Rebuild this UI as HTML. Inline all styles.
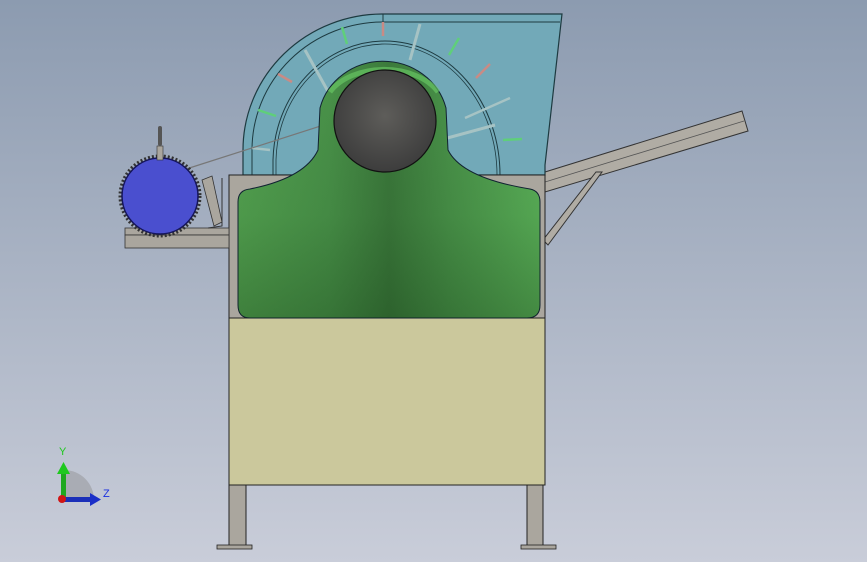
<!DOCTYPE html>
<html><head><style>
html,body{margin:0;padding:0;width:867px;height:562px;overflow:hidden}
</style></head><body>
<svg width="867" height="562" viewBox="0 0 867 562" xmlns="http://www.w3.org/2000/svg">
<defs>
<linearGradient id="bg" x1="0" y1="0" x2="0" y2="1">
<stop offset="0" stop-color="#8c9bb0"/><stop offset="1" stop-color="#c9cdd9"/></linearGradient>
<radialGradient id="ball" cx="0.5" cy="0.45" r="0.6">
<stop offset="0" stop-color="#5e5d5a"/><stop offset="1" stop-color="#3a3a3a"/></radialGradient>
<linearGradient id="gb" x1="0" y1="0" x2="1" y2="0">
<stop offset="0" stop-color="#55a552"/><stop offset="0.3" stop-color="#4a944a"/><stop offset="0.5" stop-color="#3c7a3c"/><stop offset="0.7" stop-color="#4a944a"/><stop offset="1" stop-color="#5cb35a"/></linearGradient>
<linearGradient id="gv" x1="0" y1="0" x2="0" y2="1">
<stop offset="0" stop-color="#000" stop-opacity="0"/><stop offset="0.6" stop-color="#0a2a0a" stop-opacity="0.1"/><stop offset="1" stop-color="#0a2a0a" stop-opacity="0.3"/></linearGradient>
</defs>
<rect width="867" height="562" fill="url(#bg)"/>
<polygon points="545,172 742,111 748,131 545,192" fill="#b0aca4" stroke="#333" stroke-width="1"/>
<line x1="545" y1="182" x2="744" y2="121" stroke="#555" stroke-width="0.8"/>
<polygon points="596,172 602,172 548,245 543,240" fill="#b0aca4" stroke="#333" stroke-width="1"/>
<path d="M243,175 L243,150 A140,136 0 0 1 383,14 L562,14 L545,165 L545,175 Z" fill="#72a9b8" stroke="#1d3a40" stroke-width="1.2"/>
<line x1="383" y1="14" x2="383" y2="22" stroke="#1d3a40"/>
<path d="M252,175 L252,150 A131,128 0 0 1 383,22 L560,22" fill="none" stroke="#1d3a40" stroke-width="1"/>
<path d="M273,175 L273,160 A112,122 0 0 1 385,41 A115,134 0 0 1 500,175" fill="none" stroke="#1d3a40" stroke-width="1"/>
<path d="M276,175 L276,160 A109,119 0 0 1 385,44 A112,131 0 0 1 497,175" fill="none" stroke="#1d3a40" stroke-width="0.8"/>
<g stroke-width="2.5">
<line x1="342" y1="27" x2="347" y2="44" stroke="#5fcf7a"/>
<line x1="383" y1="22" x2="383" y2="36" stroke="#c98b85"/>
<line x1="459" y1="38" x2="449" y2="55" stroke="#5fcf7a"/>
<line x1="490" y1="64" x2="476" y2="78" stroke="#c98b85"/>
<line x1="522" y1="139" x2="503" y2="140" stroke="#5fcf7a"/>
<line x1="278" y1="74" x2="292" y2="82" stroke="#c98b85"/>
<line x1="258" y1="110" x2="276" y2="116" stroke="#5fcf7a"/>
<line x1="420" y1="24" x2="410" y2="60" stroke="#a6c3c4" stroke-width="3"/>
<line x1="305" y1="50" x2="330" y2="95" stroke="#a6c3c4" stroke-width="3"/>
<line x1="510" y1="98" x2="465" y2="118" stroke="#a6c3c4"/>
<line x1="495" y1="125" x2="440" y2="140" stroke="#a6c3c4" stroke-width="3"/>
<line x1="252" y1="148" x2="270" y2="150" stroke="#a6c3c4"/>
</g>
<line x1="180" y1="171" x2="330" y2="123" stroke="#777" stroke-width="1.2"/>
<rect x="229" y="175" width="316" height="143" fill="#aaa69e" stroke="#222" stroke-width="1"/>
<rect x="229" y="318" width="316" height="167" fill="#cbc89c" stroke="#222" stroke-width="1"/>
<rect x="229" y="485" width="17" height="62" fill="#aaa69e" stroke="#222"/>
<rect x="527" y="485" width="16" height="62" fill="#aaa69e" stroke="#222"/>
<rect x="217" y="545" width="35" height="4" fill="#aaa69e" stroke="#222" stroke-width="0.8"/>
<rect x="521" y="545" width="35" height="4" fill="#aaa69e" stroke="#222" stroke-width="0.8"/>
<path d="M250,189 Q305,178 318,150 L320,108 A65,62 0 0 1 446,108 L448,150 Q462,178 530,189 Q540,191 540,202 L540,305 Q540,318 527,318 L250,318 Q238,318 238,305 L238,202 Q238,190 250,189 Z" fill="url(#gb)" stroke="#123" stroke-width="1"/>
<path d="M250,189 Q305,178 318,150 L320,108 A65,62 0 0 1 446,108 L448,150 Q462,178 530,189 Q540,191 540,202 L540,305 Q540,318 527,318 L250,318 Q238,318 238,305 L238,202 Q238,190 250,189 Z" fill="url(#gv)"/>
<path d="M330,92 A60,40 0 0 1 438,92" fill="none" stroke="#6ccf68" stroke-width="5" opacity="0.6"/>
<circle cx="385" cy="121" r="51" fill="url(#ball)" stroke="#111" stroke-width="1.2"/>
<rect x="125" y="228" width="104" height="7" fill="#aaa69e" stroke="#333" stroke-width="0.8"/>
<rect x="125" y="235" width="104" height="13" fill="#aaa69e" stroke="#333" stroke-width="0.8"/>
<polygon points="202,180 212,176 222,222 214,226" fill="#aaa69e" stroke="#333" stroke-width="0.8"/>
<polyline points="222,178 222,226 208,228" fill="none" stroke="#333" stroke-width="1"/>
<circle cx="160" cy="196" r="40" fill="none" stroke="#333" stroke-width="3" stroke-dasharray="2,2"/>
<circle cx="160" cy="196" r="38" fill="#4a4fcf" stroke="#15155a" stroke-width="1.5"/>
<rect x="157" y="146" width="6" height="14" fill="#aaa69e" stroke="#333" stroke-width="0.6"/>
<rect x="158" y="126" width="4" height="20" fill="#555" rx="2"/>
<path d="M64,500 L64,470 A30,30 0 0 1 94,500 Z" fill="#a9acb4"/>
<rect x="61" y="472" width="5" height="28" fill="#1fa81f"/>
<polygon points="57,474 70,474 63.5,462" fill="#1fc81f"/>
<rect x="64" y="497" width="28" height="5" fill="#1a2fb8"/>
<polygon points="90,493 90,506 101,499.5" fill="#1a2fc8"/>
<circle cx="62" cy="499" r="4" fill="#d01515"/>
<text x="59" y="455" font-family="Liberation Sans,sans-serif" font-size="11" fill="#1fc81f">Y</text>
<text x="103" y="497" font-family="Liberation Sans,sans-serif" font-size="11" fill="#1a2fe0">Z</text>
</svg>
</body></html>
